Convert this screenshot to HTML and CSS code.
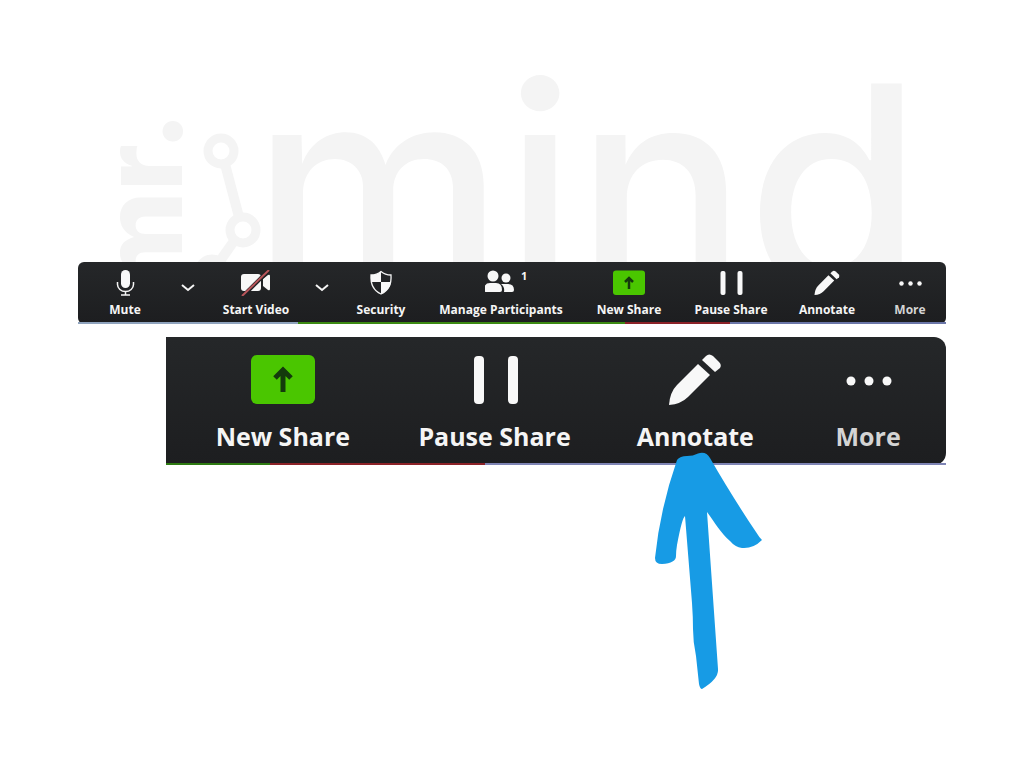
FILE: index.html
```
<!DOCTYPE html>
<html lang="en">
<head>
    <meta charset="UTF-8">
    <meta name="viewport" content="width=device-width, initial-scale=1.0">
    <title>Annotate</title>
    <link rel="stylesheet" href="styles.css">
</head>
<body>
    <!-- shared icons -->
    <svg class="sprite" aria-hidden="true">
        <symbol id="icon-share" viewBox="0 0 64 50">
            <rect width="64" height="49" rx="6" fill="#4ac600"/>
            <path d="M32 37V16M24 23l8-8 8 8" fill="none" stroke="#143a0c" stroke-width="5"/>
        </symbol>
        <symbol id="icon-pause" viewBox="0 0 64 50">
            <rect x="11" y="1" width="10" height="48" rx="4"/>
            <rect x="45" y="1" width="10" height="48" rx="4"/>
        </symbol>
        <symbol id="icon-pencil" viewBox="0 0 64 54">
            <path d="M6 52q1-13 8-20L35 11l12 11-22 22Q18 51 6 52z"/>
            <path d="M39 7l4-4q3-3 7 0l6 6q3 3 1 6l-5 4z"/>
        </symbol>
        <symbol id="icon-more" viewBox="0 0 64 50">
            <circle cx="15" cy="26" r="4.500"/>
            <circle cx="33" cy="26" r="4.500"/>
            <circle cx="51" cy="26" r="4.500"/>
        </symbol>
    </svg>

    <main class="page">
        <svg class="logo" viewBox="0 0 868 198" role="img" aria-label="mr. mind">
            <text class="logo-mr" transform="translate(104 231) rotate(-90)">mr.</text>
            <g fill="none" stroke="#f4f4f4" stroke-width="9">
                <circle cx="143" cy="87" r="13"/>
                <circle cx="165" cy="166" r="13"/>
                <circle cx="134" cy="208" r="13"/>
                <path stroke-width="10" d="M147 100l14 53M156 177l-14 20"/>
            </g>
            <text class="logo-mind" x="174" y="226">mind</text>
        </svg>

        <div class="toolbar toolbar-full">
            <button class="tool" type="button">
                <svg class="icon" viewBox="0 0 32 26">
                    <rect x="12" y="0" width="9" height="18" rx="4.500"/>
                    <path d="M8.500 12v2.500a8 7 0 0 0 16 0V12M16.500 21v4M12 25h9" fill="none" stroke="#f5f5f5" stroke-width="1.500"/>
                </svg>
                <span>Mute</span>
            </button>
            <button class="chevron" type="button" aria-label="Audio options">
                <svg viewBox="0 0 16 10"><path d="M2 2l6 5 6-5"/></svg>
            </button>
            <button class="tool" type="button">
                <svg class="icon" viewBox="0 0 32 26">
                    <rect x="1" y="4" width="20" height="17" rx="3"/>
                    <path d="M23 9l5-4q2-1 2 1v13q0 2-2 1l-5-4z"/>
                    <path d="M3 26L29 0" stroke="#202124" stroke-width="4"/>
                    <path d="M2 26L29 0" stroke="#b8555a" stroke-width="2"/>
                </svg>
                <span>Start Video</span>
            </button>
            <button class="chevron" type="button" aria-label="Video options">
                <svg viewBox="0 0 16 10"><path d="M2 2l6 5 6-5"/></svg>
            </button>
            <button class="tool" type="button">
                <svg class="icon" viewBox="0 0 32 26">
                    <path d="M16 1.500Q20 5 26 5q1 14-10 19Q5 19 6 5q6 0 10-3.500z" fill="none" stroke="#f5f5f5" stroke-width="1.300"/>
                    <path d="M16 1.500V12H6V5q6 0 10-3.500zM16 12h10q-1 8-10 12z"/>
                </svg>
                <span>Security</span>
            </button>
            <button class="tool" type="button">
                <span class="icon-wrap">
                    <svg class="icon" viewBox="2 0 32 26">
                        <circle cx="10" cy="6" r="5.500"/>
                        <circle cx="23" cy="8" r="4.500"/>
                        <path d="M1 20q0-7 6-7h6q6 0 6 7 0 2-2 2H3q-2 0-2-2zM18 14h7q6 0 6 6 0 2-2 2h-8q1-5-3-8z"/>
                    </svg>
                    <sup class="count">1</sup>
                </span>
                <span>Manage Participants</span>
            </button>
            <button class="tool" type="button">
                <svg class="icon"><use href="#icon-share"/></svg>
                <span>New Share</span>
            </button>
            <button class="tool" type="button">
                <svg class="icon"><use href="#icon-pause"/></svg>
                <span>Pause Share</span>
            </button>
            <button class="tool" type="button">
                <svg class="icon"><use href="#icon-pencil"/></svg>
                <span>Annotate</span>
            </button>
            <button class="tool more" type="button">
                <svg class="icon"><use href="#icon-more"/></svg>
                <span>More</span>
            </button>
        </div>

        <div class="toolbar toolbar-zoom">
            <button class="tool" type="button">
                <svg class="icon"><use href="#icon-share"/></svg>
                <span>New Share</span>
            </button>
            <button class="tool" type="button">
                <svg class="icon"><use href="#icon-pause"/></svg>
                <span>Pause Share</span>
            </button>
            <button class="tool annotate" type="button">
                <svg class="icon"><use href="#icon-pencil"/></svg>
                <span>Annotate</span>
                <svg class="arrow" viewBox="0 0 112 240" aria-hidden="true">
                    <path d="M26 8Q29 4 36 4Q42 4 47 1.500Q55-1 59 6C74 32 92 61 105 80Q108 85 111 88Q102 97 91 96Q84 95 79 89C70 81 64 71 56 60L67 217Q68 227 51 237Q49 237 48 232L45 204Q42 190 42 177Q42 165 41 151L34 64Q31 66 26 93Q25 99 25 104Q25 111 11 112Q4 112 4 106Q9 57 26 8z"/>
                </svg>
            </button>
            <button class="tool more" type="button">
                <svg class="icon"><use href="#icon-more"/></svg>
                <span>More</span>
            </button>
        </div>
    </main>
</body>
</html>
```
FILE: styles.css
```
* {
    box-sizing: border-box;
}

body {
    margin: 0;
    background: #fff;
    font-family: "Open Sans", "Noto Sans", sans-serif;
}

.sprite {
    position: absolute;
    width: 0;
    height: 0;
}

.page {
    min-height: 100vh;
    padding: 64px 78px 40px;
}

/* logo */
.logo {
    display: block;
    width: 100%;
    fill: #f4f4f4;
    overflow: hidden;
}

.logo-mr {
    font: 800 112px Inter, sans-serif;
}

.logo-mind {
    font: 500 284px Inter, sans-serif;
}

/* toolbars */
.toolbar {
    display: grid;
    background: linear-gradient(#252729, #1d1e20);
    color: #f5f5f5;
}

.toolbar-full {
    grid-template-columns: 94fr 32fr 104fr 28fr 90fr 150fr 106fr 98fr 94fr 72fr;
    height: 62px;
    border-style: solid;
    border-width: 0 0 2px;
    border-image: linear-gradient(90deg, #8fa3bd 25.500%, #3c8a12 25.500% 63%, #8c2228 63% 75%, #6b76a8 75%) 2;
    border-radius: 6px;
}

.toolbar-zoom {
    grid-template-columns: 234fr 190fr 212fr 134fr;
    height: 128px;
    margin: 13px 0 0 88px;
    padding-right: 11px;
    border-style: solid;
    border-width: 0 0 2px;
    border-image: linear-gradient(90deg, #2e7a12 13.500%, #8c2228 13.500% 41%, #7e84b4 41%) 2;
    border-radius: 0 12px 12px 0;
}

.tool,
.chevron {
    display: flex;
    align-items: center;
    min-width: 0;
    padding: 0;
    border: 0;
    background: none;
    color: inherit;
    font: inherit;
    cursor: pointer;
}

.tool {
    flex-direction: column;
    font-size: 12px;
    font-weight: 700;
    line-height: 16px;
    white-space: nowrap;
    padding-top: 8px;
    gap: 6px;
}

.icon {
    display: block;
    width: 32px;
    height: 26px;
    fill: #f8f8f8;
}

.icon-wrap {
    position: relative;
}

.count {
    position: absolute;
    top: 0;
    left: 36px;
    font-size: 11px;
    line-height: 12px;
}

.chevron {
    justify-content: center;
    padding-bottom: 8px;
}

.chevron svg {
    width: 16px;
    height: 10px;
    fill: none;
    stroke: #f5f5f5;
    stroke-width: 2;
}

.more {
    color: #d4d4d4;
}

.toolbar-zoom .tool {
    font-size: 25px;
    line-height: 32px;
    padding-top: 16px;
    gap: 13px;
}

.toolbar-zoom .icon {
    width: 64px;
    height: 54px;
}

/* pointer under the Annotate button */
.annotate {
    position: relative;
}

.arrow {
    position: absolute;
    top: 115px;
    left: 62px;
    width: 112px;
    height: 240px;
    fill: #179be5;
}
```
